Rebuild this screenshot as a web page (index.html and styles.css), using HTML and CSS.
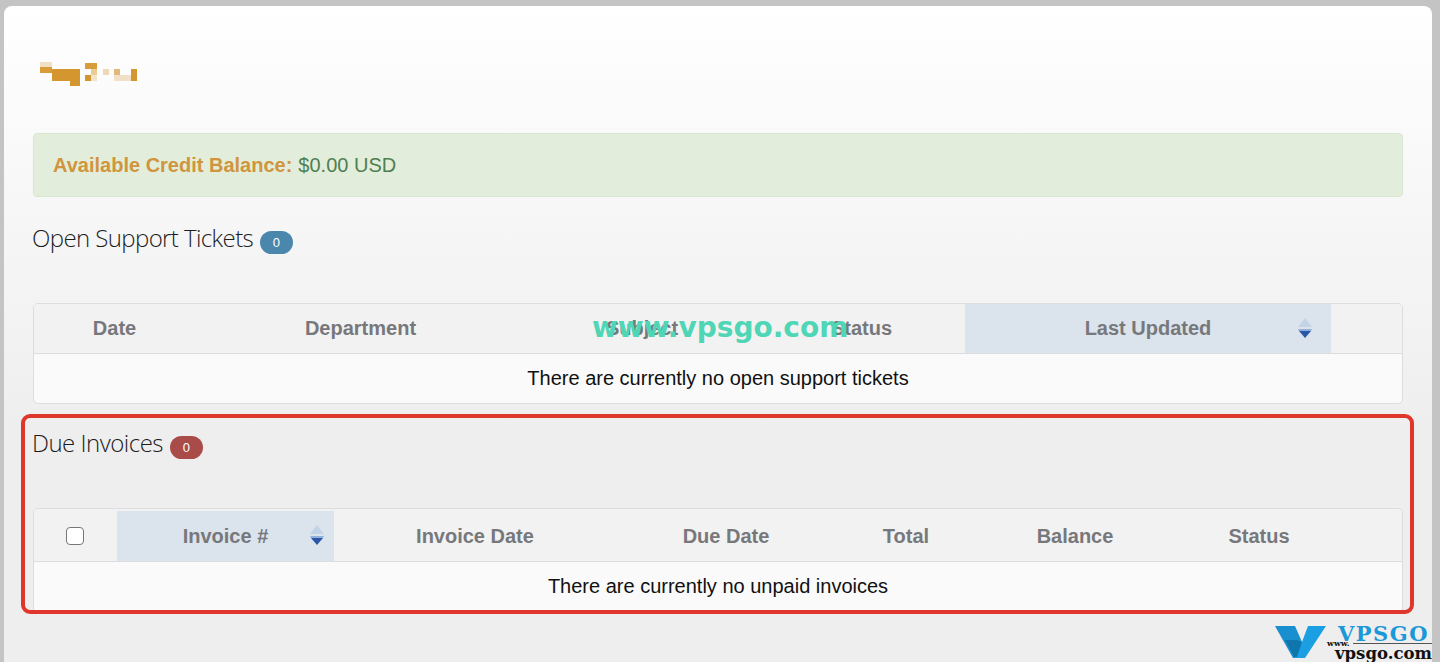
FILE: index.html
```html
<!DOCTYPE html>
<html lang="en">
<head>
<meta charset="utf-8">
<title>Client Area</title>
<link rel="stylesheet" href="styles.css">
</head>
<body>
<main class="panel">
  <svg class="logo" width="97" height="24" viewBox="0 0 97 24" aria-hidden="true">
    <rect x="0" y="0" width="12" height="6" fill="#f0dfc2"/>
    <rect x="0" y="5" width="12" height="6" fill="#d89c38"/>
    <rect x="12" y="7" width="28" height="12" fill="#d4962f"/>
    <rect x="30" y="19" width="10" height="5" fill="#d4962f"/>
    <rect x="45" y="1" width="12" height="6" fill="#d89c38"/>
    <rect x="51" y="7" width="6" height="6" fill="#eccb94"/>
    <rect x="45" y="13" width="6" height="6" fill="#d4962f"/>
    <rect x="51" y="13" width="6" height="6" fill="#f3e3c8"/>
    <rect x="63" y="7" width="6" height="6" fill="#efd9b4"/>
    <rect x="74" y="7" width="6" height="6" fill="#e2b878"/>
    <rect x="74" y="13" width="17" height="6" fill="#f1e0c6"/>
    <rect x="91" y="7" width="6" height="12" fill="#d4962f"/>
  </svg>

  <div class="alert"><strong>Available Credit Balance:</strong> $0.00 USD</div>

  <h2 class="heading heading-tickets">Open Support Tickets <span class="badge badge-blue">0</span></h2>

  <div class="table table-tickets">
    <div class="row-head cols-tickets">
      <div class="th">Date</div>
      <div class="th">Department</div>
      <div class="th">Subject</div>
      <div class="th">Status</div>
      <div class="th sorted">Last Updated
        <svg class="sort sort-tickets" width="14" height="21" viewBox="0 0 14 21" aria-hidden="true"><path d="M7 0 14 9H0Z" fill="#c3d3e6"/><path d="M0 11H14L13 13H1Z" fill="#8fb0d8"/><path d="M1 13H13L7 20Z" fill="#2a58a6"/></svg>
      </div>
      <div class="th"></div>
    </div>
    <div class="row-empty">There are currently no open support tickets</div>
  </div>

  <section class="highlight">
    <h2 class="heading heading-due">Due Invoices <span class="badge badge-red">0</span></h2>
    <div class="table table-due">
      <div class="row-head row-head-due cols-due">
        <div class="th"><input class="check" type="checkbox" aria-label="Select all"></div>
        <div class="th sorted">Invoice #
          <svg class="sort sort-due" width="14" height="21" viewBox="0 0 14 21" aria-hidden="true"><path d="M7 0 14 9H0Z" fill="#c3d3e6"/><path d="M0 11H14L13 13H1Z" fill="#8fb0d8"/><path d="M1 13H13L7 20Z" fill="#2a58a6"/></svg>
        </div>
        <div class="th">Invoice Date</div>
        <div class="th">Due Date</div>
        <div class="th">Total</div>
        <div class="th">Balance</div>
        <div class="th">Status</div>
        <div class="th"></div>
      </div>
      <div class="row-empty">There are currently no unpaid invoices</div>
    </div>
  </section>

  <div class="watermark">www.vpsgo.com</div>

  <div class="brand">
    <svg class="brand-v" width="52" height="32" viewBox="0 0 52 32" aria-hidden="true">
      <path d="M0 0H20L27 16 22 32H18Z" fill="#1a8fcf"/>
      <path d="M33 0H51L30 32H20L27 16Z" fill="#1aa0e2"/>
      <path d="M10 14H22L27 16 22 31H19Z" fill="#0f76ad"/>
    </svg>
    <span class="brand-name">VPSGO</span>
    <span class="brand-www">www.</span>
    <span class="brand-rule"></span>
    <span class="brand-url">vpsgo.com</span>
  </div>
</main>
</body>
</html>
```

FILE: styles.css
```css
* { box-sizing: border-box; }

html, body {
  margin: 0;
  height: 662px;
  overflow: hidden;
}

body {
  background: #c4c4c4;
  padding: 6px 8px 0 4px;
  font-family: "Liberation Sans", Arial, sans-serif;
}

.panel {
  position: relative;
  height: 656px;
  padding: 56px 29px 0;
  border-radius: 8px 8px 0 0;
  background: linear-gradient(#ffffff 0, #f8f8f9 170px, #eeeeee 430px, #eeeeee 100%);
  overflow: hidden;
}

.logo {
  display: block;
  margin-left: 7px;
  filter: blur(.6px);
}

.alert {
  height: 64px;
  margin-top: 47px;
  padding: 1px 19px 0;
  display: flex;
  align-items: center;
  gap: 6px;
  background: #e2eedb;
  border: 1px solid #d9e6cf;
  border-radius: 4px;
  color: #4f7f50;
  font-size: 20px;
}

.alert strong { color: #d0953d; }

.heading {
  margin: 0;
  font-family: "Open Sans", sans-serif;
  font-weight: 300;
  font-size: 24px;
  line-height: 30px;
  color: #1c1c1c;
  letter-spacing: -.6px;
}

.heading-tickets { margin-top: 26px; margin-left: -1px; }
.heading-due { padding-top: 10px; box-sizing: content-box; margin-left: -1px; letter-spacing: -.5px; }

.badge {
  display: inline-block;
  width: 33px;
  height: 23px;
  margin-left: 1px;
  border-radius: 12px;
  color: #fff;
  font-family: "Liberation Sans", Arial, sans-serif;
  font-weight: 400;
  font-size: 13px;
  line-height: 23px;
  letter-spacing: 0;
  text-align: center;
  vertical-align: 0;
}

.badge-blue { background: #4b86ad; }
.badge-red { background: #a94b48; }

.table {
  border: 1px solid #dddddd;
  border-radius: 5px;
  background: #fafafa;
  overflow: hidden;
}

.table-tickets { height: 101px; margin-top: 49px; }
.table-due { height: 110px; margin-top: 49px; border-bottom: 0; }

.row-head {
  display: grid;
  height: 50px;
  border-bottom: 1px solid #dddddd;
  background: #f2f2f2;
}

.row-head-due { height: 53px; padding-top: 2px; }

.cols-tickets { grid-template-columns: 161px 331px 232px 207px 366px 1fr; }
.cols-due { grid-template-columns: 83px 217px 282px 220px 140px 198px 170px 1fr; }

.th {
  position: relative;
  display: flex;
  align-items: center;
  justify-content: center;
  color: #77787b;
  font-size: 20px;
  font-weight: 700;
}

.sorted { background: #dbe3ed; }

.sort { position: absolute; top: 50%; margin-top: -11px; }
.sort-tickets { right: 19px; }
.sort-due { right: 10px; }

.check {
  appearance: none;
  width: 18px;
  height: 18px;
  margin: 0 0 0 -1px;
  background: #fff;
  border: 1px solid #77787b;
  border-radius: 4px;
}

.row-empty {
  height: 49px;
  display: flex;
  align-items: center;
  justify-content: center;
  color: #111;
  font-size: 20px;
}

.highlight {
  height: 200px;
  margin: 10px -11px 0 -12px;
  padding: 0 7px 0 8px;
  border: 4px solid #e0372c;
  border-radius: 9px;
  overflow: hidden;
}

.watermark {
  position: absolute;
  left: 588px;
  top: 304px;
  color: #4fd6b6;
  font-family: "DejaVu Sans", sans-serif;
  font-weight: 700;
  font-size: 28px;
  line-height: 36px;
  white-space: nowrap;
}

.brand {
  position: absolute;
  left: 1271px;
  top: 618px;
  width: 157px;
  height: 38px;
  overflow: hidden;
}

.brand-v { position: absolute; left: 0; top: 2px; }

.brand-name {
  position: absolute;
  left: 63px;
  top: 0;
  color: #1a98d8;
  font-family: "DejaVu Serif", serif;
  font-weight: 700;
  font-size: 21px;
  line-height: 19px;
  letter-spacing: 1.5px;
}

.brand-www {
  position: absolute;
  left: 52px;
  top: 14px;
  color: #111;
  font-family: "DejaVu Serif", serif;
  font-weight: 700;
  font-size: 8px;
  line-height: 10px;
}

.brand-rule {
  position: absolute;
  left: 78px;
  right: 0;
  top: 19px;
  height: 1px;
  background: #555;
}

.brand-url {
  position: absolute;
  left: 60px;
  top: 21px;
  color: #111;
  font-family: "DejaVu Serif", serif;
  font-weight: 700;
  font-size: 16.5px;
  line-height: 17px;
}
```
